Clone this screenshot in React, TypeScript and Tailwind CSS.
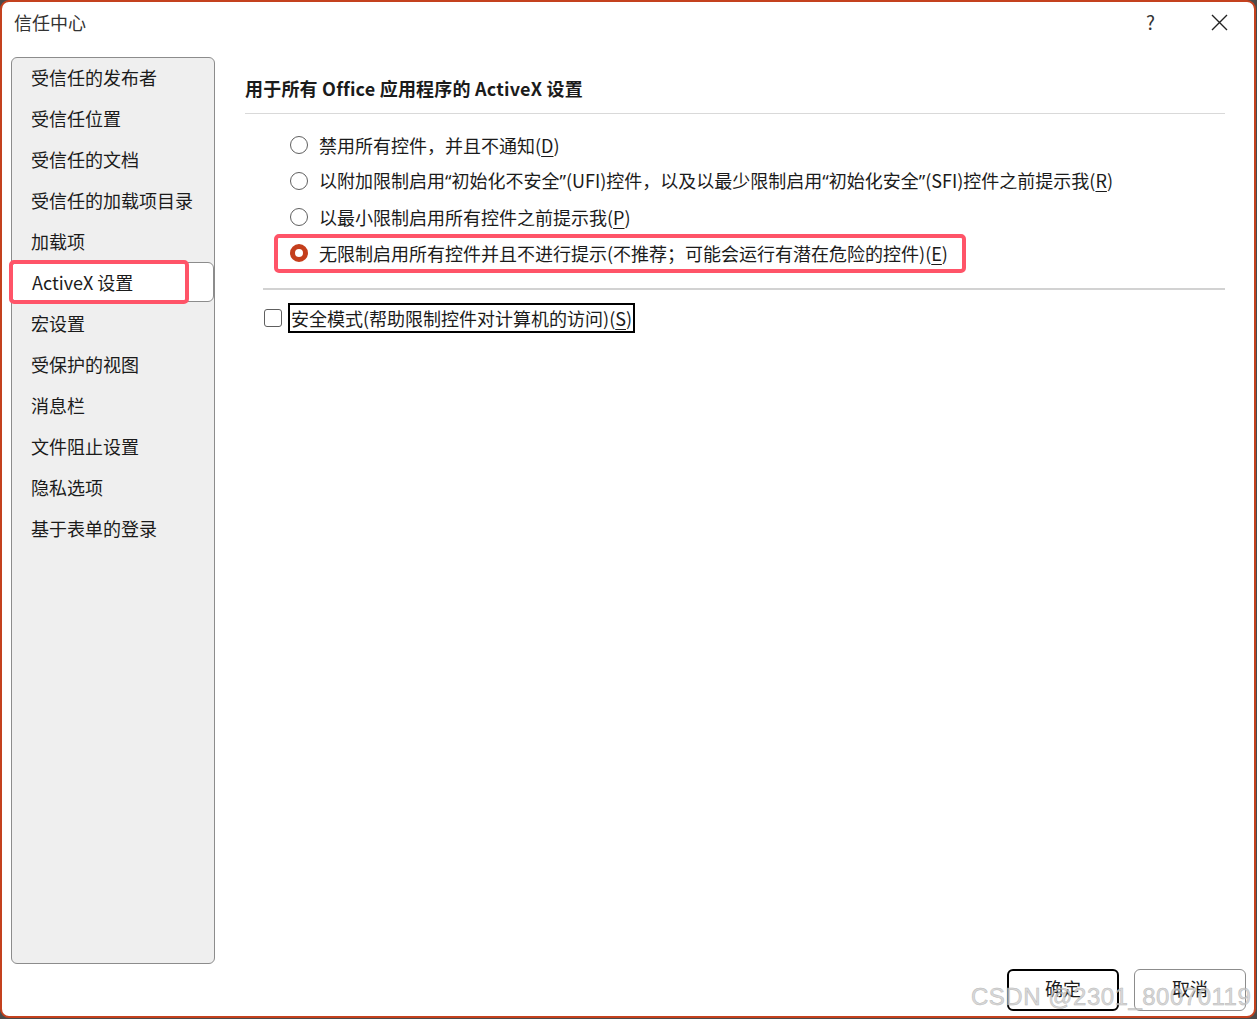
import React from "react";

const font = { fontFamily: '"Noto Sans CJK SC", "Noto Sans", sans-serif' };
const latin = { fontFamily: '"Noto Sans", "Liberation Sans", sans-serif' };

const navItems = [
  "受信任的发布者",
  "受信任位置",
  "受信任的文档",
  "受信任的加载项目录",
  "加载项",
  "ActiveX 设置",
  "宏设置",
  "受保护的视图",
  "消息栏",
  "文件阻止设置",
  "隐私选项",
  "基于表单的登录",
];

const Q = ({ c }: { c: string }) => <span style={latin}>{c}</span>;

const radios = [
  { text: <>禁用所有控件，并且不通知(</>, key: "D" },
  {
    text: (
      <>
        以附加限制启用<Q c="“" />初始化不安全<Q c="”" />(UFI)控件，以及以最少限制启用<Q c="“" />初始化安全<Q c="”" />(SFI)控件之前提示我(
      </>
    ),
    key: "R",
  },
  { text: <>以最小限制启用所有控件之前提示我(</>, key: "P" },
  { text: <>无限制启用所有控件并且不进行提示(不推荐；可能会运行有潜在危险的控件)(</>, key: "E" },
];

const Radio = ({ checked }: { checked: boolean }) =>
  checked ? (
    <span className="w-[18px] h-[18px] rounded-full border-[5px] border-[#c43e1c] bg-white shrink-0" />
  ) : (
    <span className="w-[18px] h-[18px] rounded-full border-[1.5px] border-[#5f5f5f] bg-white shrink-0" />
  );

export default function App() {
  return (
    <div className="w-[1257px] h-[1019px] bg-[#4a4a4a] relative overflow-hidden" style={font}>
      <div className="absolute left-0 top-0 w-[1256px] h-[1018px] bg-white border-2 border-[#c4411e] rounded-[9px] flex flex-col text-[#1b1b1b]">
        {/* title bar */}
        <div className="h-[40px] flex items-center justify-between pl-[12px] pr-[26px]">
          <span className="text-[18px] text-[#333]">信任中心</span>
          <div className="flex items-center gap-[56px]">
            <span className="text-[19px] text-[#333]">?</span>
            <svg width="17" height="17" viewBox="0 0 17 17">
              <path d="M1 1 L16 16 M16 1 L1 16" stroke="#222" strokeWidth="1.4" />
            </svg>
          </div>
        </div>

        {/* body */}
        <div className="flex mt-[15px]">
          <div className="ml-[9px] w-[204px] h-[907px] bg-[#efefef] border border-[#8c8c8c] rounded-[6px] relative">
            {navItems.map((item, i) =>
              i === 5 ? (
                <div key={item} className="relative h-[41px] -mx-px">
                  <div className="absolute left-0 right-[1px] top-[-1px] h-[40px] bg-white border border-[#8c8c8c] rounded-[6px] flex items-center pl-[20px] text-[18px]">
                    {item}
                  </div>
                  <div className="absolute left-[-2px] top-[-3px] w-[180px] h-[44px] border-[4px] border-[#ff5468] rounded-[5px]" />
                </div>
              ) : (
                <div key={item} className="h-[41px] flex items-center pl-[19px] pb-[2px] text-[18px]">
                  {item}
                </div>
              )
            )}
          </div>

          <div className="ml-[30px] w-[980px]">
            <div className="pt-[19px] leading-[24px] text-[18px] font-bold tracking-[0.2px]">用于所有 Office 应用程序的 ActiveX 设置</div>
            <div className="mt-[13px] h-px bg-[#d9d9d9]" />

            <div className="mt-[13px] pl-[45px]">
              {radios.map((r, i) => (
                <div key={r.key} className="h-[36px] flex items-center gap-[11px] text-[18px] relative">
                  <Radio checked={i === 3} />
                  <span>
                    {r.text}
                    <span className="underline underline-offset-[3px]">{r.key}</span>)
                  </span>
                  {i === 3 && (
                    <div className="absolute left-[-16px] top-[-1px] w-[692px] h-[39px] border-[4px] border-[#ff5468] rounded-[5px]" />
                  )}
                </div>
              ))}
            </div>

            <div className="mt-[17px] ml-[18px] h-[2px] bg-[#d2d2d2]" />

            <div className="mt-[10px] ml-[19px] h-[36px] flex items-center gap-[6px]">
              <span className="w-[18px] h-[18px] border-[1.5px] border-[#5f5f5f] rounded-[3px] bg-white shrink-0" />
              <span className="border-2 border-black px-[1px] h-[30px] flex items-center text-[18px]">
                安全模式(帮助限制控件对计算机的访问)(
                <span className="underline underline-offset-[3px]">S</span>)
              </span>
            </div>
          </div>
        </div>

        {/* footer */}
        <div className="mt-[5px] flex justify-end gap-[15px] pr-[8px]">
          <button className="w-[112px] h-[42px] border-2 border-black rounded-[6px] bg-white text-[18px] pb-[4px]">确定</button>
          <button className="w-[112px] h-[42px] border border-[#8c8c8c] rounded-[6px] bg-white text-[18px] pb-[4px]">取消</button>
        </div>
      </div>

      {/* watermark */}
      <div
        className="absolute left-[971px] top-[982px] text-[24px] leading-[30px] text-[#d0d0d0] tracking-[0.5px]"
        style={{ fontFamily: '"Liberation Sans", Arial, sans-serif', WebkitTextStroke: "0.5px #a8a8a8", opacity: 0.8 }}
      >
        CSDN @2301_80070119
      </div>
    </div>
  );
}
